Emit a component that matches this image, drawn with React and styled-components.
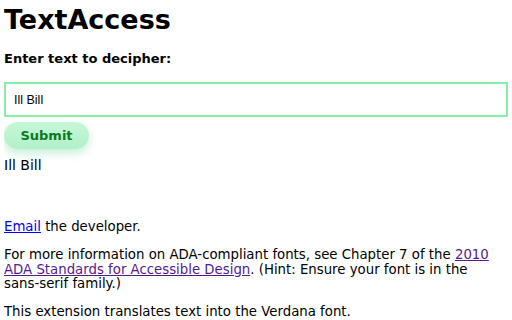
import styled, { createGlobalStyle } from "styled-components"

const Global = createGlobalStyle`
    body {
        margin: 4px;
        font-family: "DejaVu Sans", Verdana, sans-serif;
        font-size: 13.3px;
        color: #000;
        background: #fff;
    }
`
const Title = styled.h1`
    font-size: 27px;
    font-weight: bold;
    margin: 0 0 16px 0;
`
const Label = styled.h3`
    font-size: 13px;
    font-weight: bold;
    margin: 0 0 16px 0;
`
const Input = styled.input`
    display: block;
    box-sizing: border-box;
    width: 100%;
    height: 35px;
    padding: 0 8px;
    border: 2px solid #84f0aa;
    font-family: "Liberation Sans", Arial, sans-serif;
    font-size: 12.5px;
    outline: none;
`
const Button = styled.button`
    margin-top: 5px;
    width: 85px;
    height: 27px;
    border: none;
    border-radius: 14px;
    background: linear-gradient(#c6f7d8, #b2f0c9);
    box-shadow: 0 4px 10px rgba(120, 220, 160, 0.45);
    color: #0a7a1e;
    font-family: "DejaVu Sans", Verdana, sans-serif;
    font-weight: bold;
    font-size: 13px;
    cursor: pointer;
`
const Output = styled.p`
    font-size: 14px;
    margin: 8px 0 0 0;
    min-height: 63px;
`
const Text = styled.p`
    margin: 0 0 13.5px 0;
    line-height: 14.5px;
`
const Link = styled.a`
    color: ${(p) => (p.$visited ? "#551a8b" : "#0000ee")};
`
const NoBreak = styled.span`
    white-space: nowrap;
`

function App() {
    return (
        <>
            <Global />
            <Title>TextAccess</Title>
            <Label>Enter text to decipher:</Label>
            <Input defaultValue="Ill Bill" />
            <Button>Submit</Button>
            <Output>Ill Bill</Output>
            <Text><Link href="#">Email</Link> the developer.</Text>
            <Text>
                For more information on ADA-compliant fonts, see Chapter 7 of the{" "}
                <Link href="#" $visited>2010 ADA Standards for Accessible Design</Link>. (Hint: Ensure your font is in the <NoBreak>sans-serif</NoBreak> family.)
            </Text>
            <Text>This extension translates text into the Verdana font.</Text>
        </>
    )
}

export default App
